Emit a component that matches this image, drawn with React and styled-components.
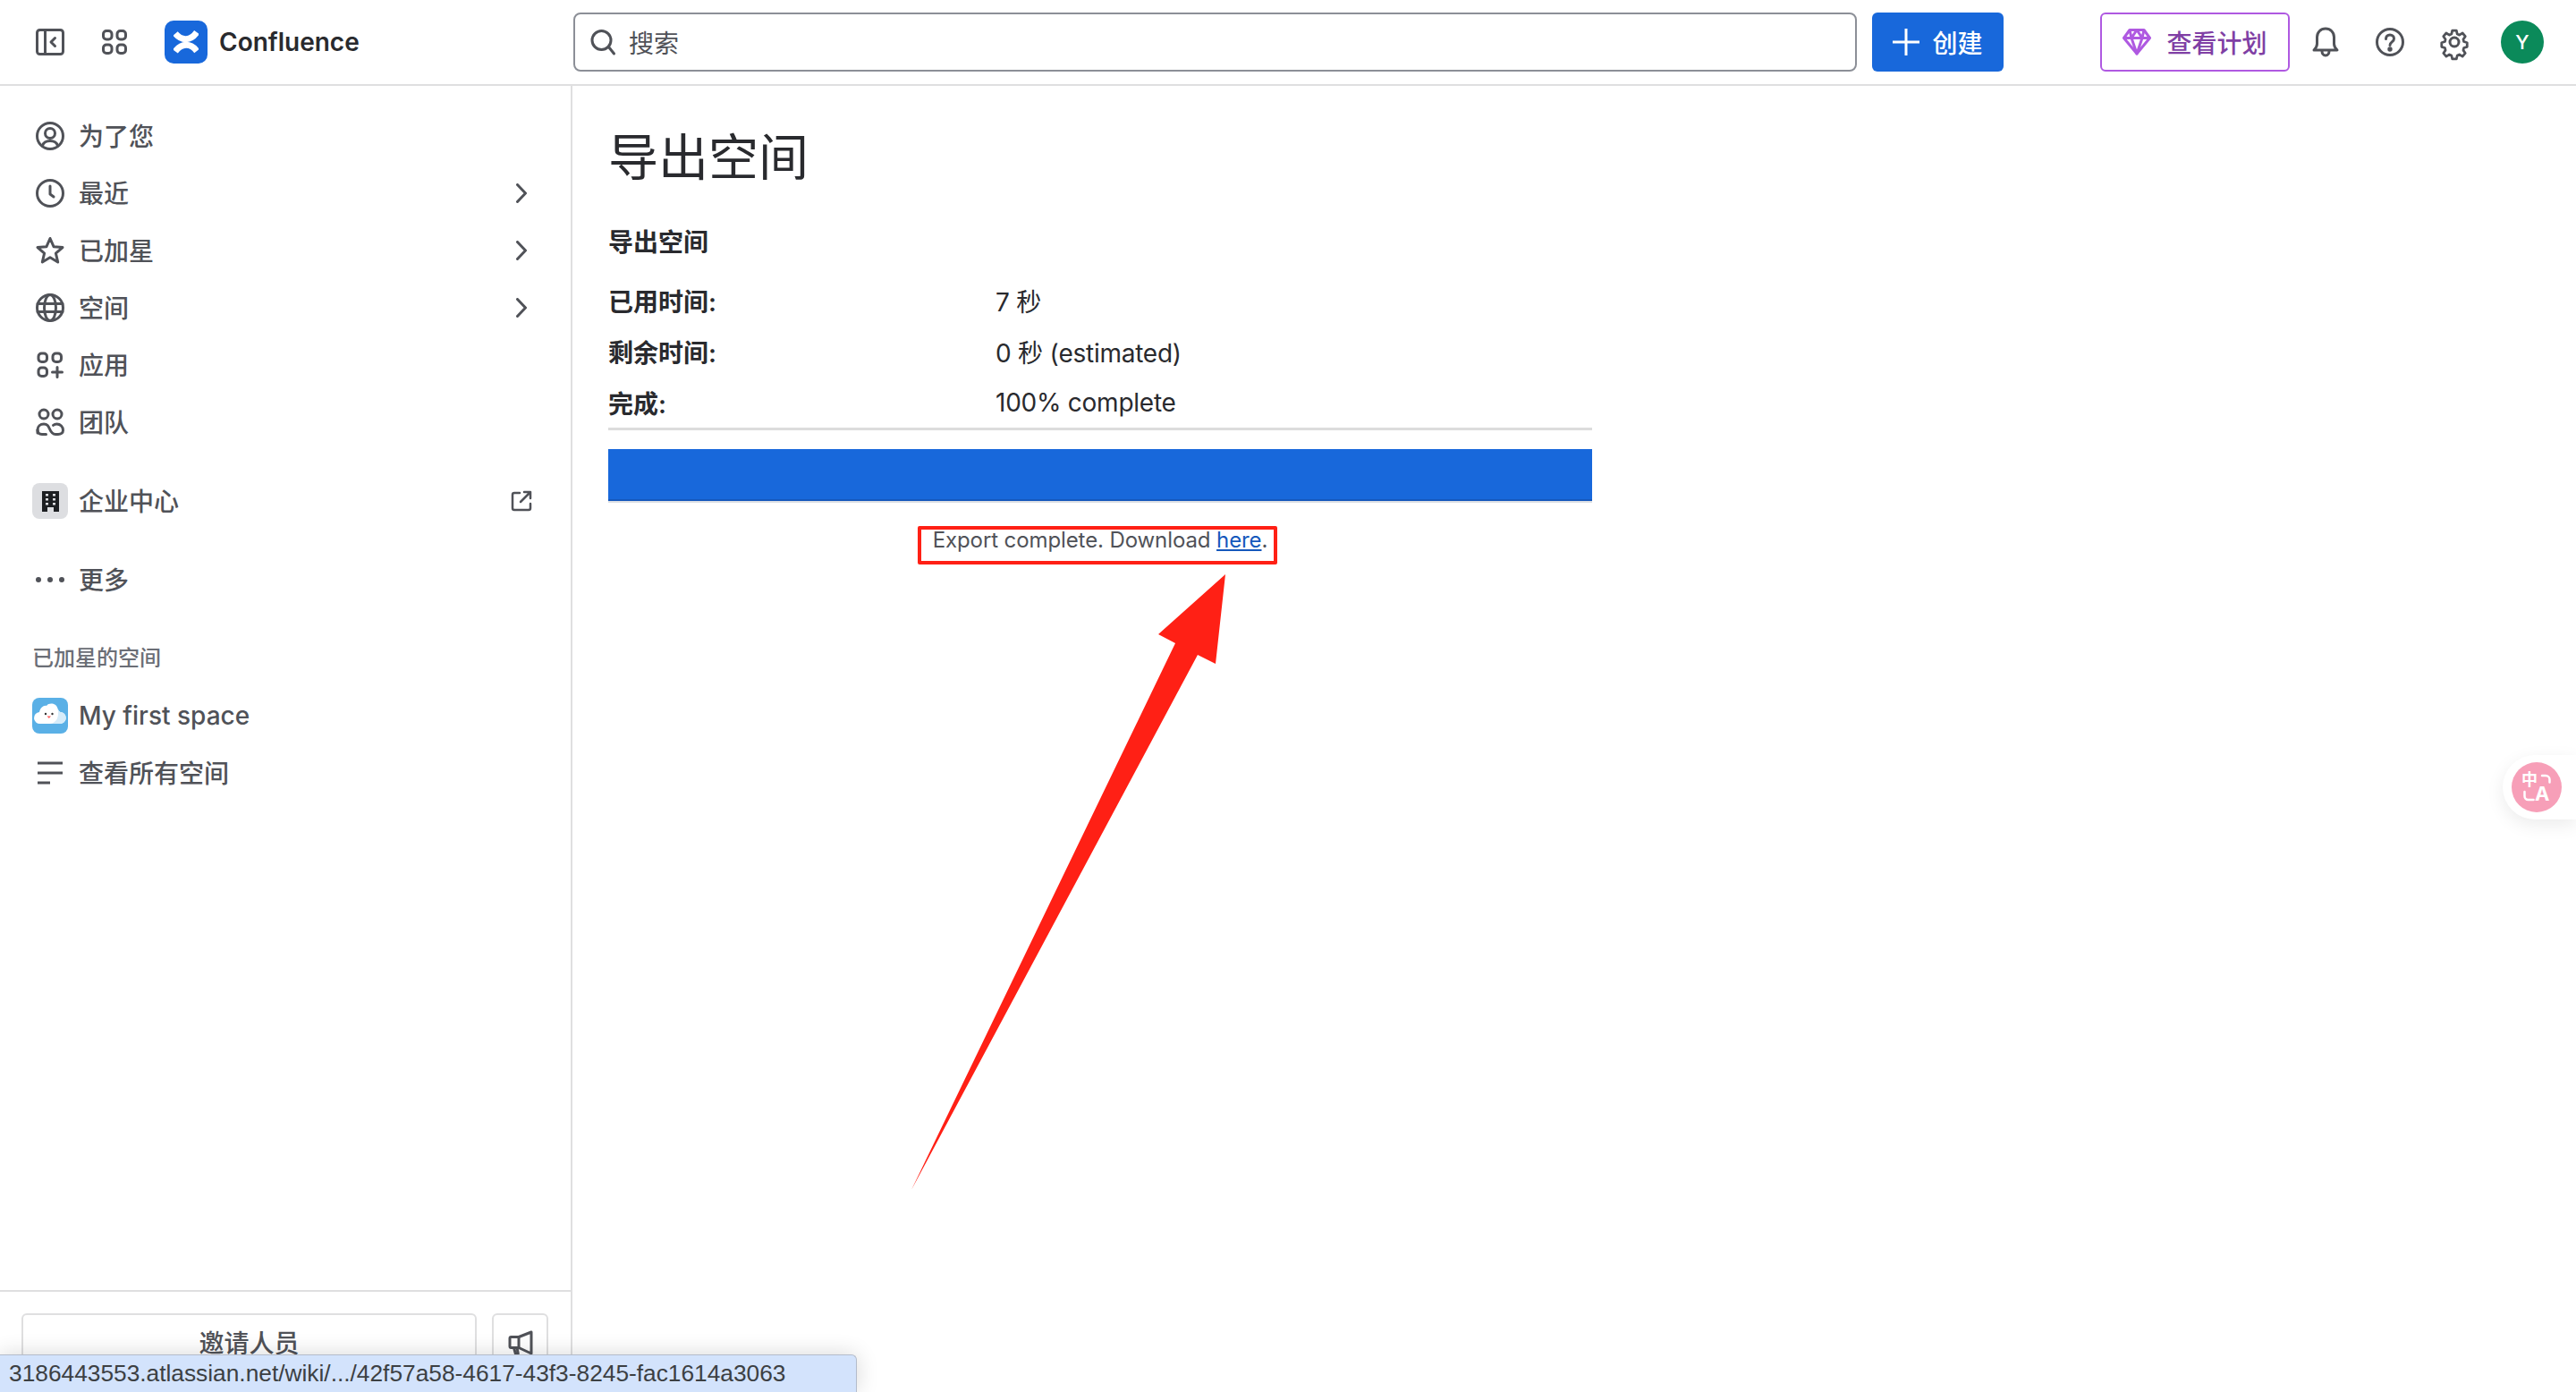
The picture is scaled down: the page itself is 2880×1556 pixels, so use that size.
import React from "react";
import styled, { createGlobalStyle } from "styled-components";

const FONT = `Inter, "Noto Sans CJK SC", "Noto Sans", sans-serif`;

const Global = createGlobalStyle`
  html, body { margin: 0; padding: 0; background: #fff; }
  body { font-family: ${FONT}; color: #292a2e; }
  * { box-sizing: border-box; }
`;

const Page = styled.div`
  position: relative;
  width: 2880px;
  height: 1556px;
  overflow: hidden;
  display: flex;
  flex-direction: column;
  background: #fff;
`;

const TopBar = styled.header`
  height: 96px;
  flex: none;
  display: flex;
  align-items: center;
  border-bottom: 2px solid #dfdfe0;
  padding-left: 40px;
`;

const IconSlot = styled.span`
  width: ${(p) => p.$w || 32}px;
  height: ${(p) => p.$h || 32}px;
  flex: none;
  display: inline-flex;
  align-items: center;
  justify-content: center;
  margin-left: ${(p) => p.$ml || 0}px;
  color: ${(p) => p.$color || "#505258"};
  svg { display: block; overflow: visible; }
`;

const Logo = styled.span`
  width: 48px;
  height: 48px;
  flex: none;
  margin-left: 40px;
  border-radius: 10px;
  background: #1868db;
  display: flex;
  align-items: center;
  justify-content: center;
`;

const Brand = styled.span`
  margin-left: 13px;
  font-size: 28px;
  font-weight: 600;
  color: #292a2e;
  width: 396px;
`;

const Search = styled.div`
  width: 1435px;
  height: 66px;
  flex: none;
  border: 2px solid #8c8f97;
  border-radius: 8px;
  display: flex;
  align-items: center;
  padding-left: 17px;
  gap: 15px;
  font-size: 28px;
  color: #505258;
`;

const Create = styled.button`
  width: 147px;
  height: 66px;
  flex: none;
  margin-left: 17px;
  border: 0;
  border-radius: 6px;
  background: #1868db;
  color: #fff;
  font: 500 28px ${FONT};
  display: flex;
  align-items: center;
  justify-content: center;
  gap: 14px;
  padding: 0;
`;

const Plan = styled.button`
  width: 212px;
  height: 66px;
  flex: none;
  margin-left: 108px;
  border: 2px solid #af59e1;
  border-radius: 6px;
  background: #fff;
  color: #803fa5;
  font: 500 28px ${FONT};
  display: flex;
  align-items: center;
  justify-content: center;
  gap: 17px;
  padding: 0;
`;

const Avatar = styled.span`
  width: 48px;
  height: 48px;
  flex: none;
  margin-left: 36px;
  border-radius: 50%;
  background: #0b8a5a;
  color: #fff;
  font-size: 22px;
  font-weight: 500;
  display: flex;
  align-items: center;
  justify-content: center;
`;

const Body = styled.div`
  flex: 1;
  min-height: 0;
  display: flex;
`;

const Sidebar = styled.aside`
  width: 640px;
  flex: none;
  border-right: 2px solid #dfdfe0;
  display: flex;
  flex-direction: column;
`;

const SideScroll = styled.nav`
  flex: 1;
  padding: 24px 0 0 36px;
  display: flex;
  flex-direction: column;
`;

const NavRow = styled.div`
  height: 64px;
  flex: none;
  display: flex;
  align-items: center;
  padding-left: ${(p) => (p.$tile ? 0 : 4)}px;
  gap: ${(p) => (p.$tile ? 12 : 16)}px;
  margin-top: ${(p) => p.$mt || 0}px;
  font-size: 28px;
  font-weight: 500;
  color: #505258;
`;

const NavText = styled.span`
  flex: 1;
  white-space: nowrap;
  padding-bottom: ${(p) => (p.$latin ? 0 : 2)}px;
`;

const Trail = styled.span`
  width: 32px;
  height: 32px;
  flex: none;
  margin-right: 39px;
  display: flex;
  align-items: center;
  justify-content: center;
  color: #505258;
`;

const SectionLabel = styled.div`
  height: 64px;
  margin-top: 24px;
  padding-bottom: 5px;
  flex: none;
  display: flex;
  align-items: center;
  font-size: 24px;
  font-weight: 500;
  color: #6b6e76;
`;

const Tile = styled.span`
  width: 40px;
  height: 40px;
  flex: none;
  border-radius: 8px;
  background: ${(p) => p.$bg};
  display: flex;
  align-items: center;
  justify-content: center;
  overflow: hidden;
`;

const SideFooter = styled.div`
  height: 114px;
  flex: none;
  border-top: 2px solid #dfdfe0;
  padding: 24px 0 0 24px;
  display: flex;
  gap: 17px;
`;

const Invite = styled.button`
  width: 509px;
  height: 66px;
  flex: none;
  border: 2px solid #dfdfe0;
  border-radius: 6px;
  background: #fff;
  color: #505258;
  font: 500 28px ${FONT};
  padding: 0 0 2px;
`;

const Feedback = styled.button`
  width: 63px;
  height: 66px;
  flex: none;
  border: 2px solid #dfdfe0;
  border-radius: 6px;
  background: #fff;
  color: #505258;
  padding: 0;
  display: flex;
  align-items: center;
  justify-content: center;
`;

const Main = styled.main`
  flex: 1;
  min-width: 0;
  padding: 38px 0 0 40px;
`;

const Title = styled.h1`
  margin: 0;
  font-size: 56px;
  line-height: 84px;
  font-weight: 400;
  color: #292a2e;
`;

const Subtitle = styled.h2`
  margin: 33px 0 0;
  font-size: 28px;
  line-height: 40px;
  font-weight: 600;
  color: #292a2e;
`;

const Panel = styled.section`
  width: 1100px;
  margin-top: 16px;
`;

const InfoRow = styled.div`
  height: 57px;
  display: grid;
  grid-template-columns: 433px 1fr;
  align-items: center;
  font-size: 28px;
  color: #292a2e;
`;

const InfoKey = styled.span`
  font-weight: 600;
`;

const InfoValue = styled.span`
  letter-spacing: -0.25px;
`;

const Rule = styled.div`
  height: 3px;
  background: #dcdcdc;
`;

const Bar = styled.div`
  height: 60px;
  margin-top: 21px;
  background: #1868db;
  border-bottom: 2px solid #dcdfe4;
  box-shadow: inset 0 -2px 0 #1558bc;
`;

const Done = styled.div`
  margin-top: 24px;
  text-align: center;
  font-size: 24px;
  line-height: 36px;
  letter-spacing: -0.1px;
  color: #505258;
  a { color: #1558bc; text-decoration: underline; }
`;

const MarkBox = styled.div`
  position: absolute;
  left: 1026px;
  top: 588px;
  width: 402px;
  height: 43px;
  border: 4px solid #ff2015;
  border-radius: 2px;
`;

const MarkArrow = styled.svg`
  position: absolute;
  left: 0;
  top: 0;
  width: 2880px;
  height: 1556px;
  pointer-events: none;
`;

const Translate = styled.div`
  position: absolute;
  right: 0;
  top: 844px;
  width: 82px;
  height: 72px;
  background: #fff;
  border-radius: 36px 0 0 36px;
  box-shadow: 0 6px 20px rgba(0, 0, 0, 0.08);
  padding: 8px 0 0 10px;
`;

const TranslateDot = styled.div`
  width: 56px;
  height: 56px;
  border-radius: 50%;
  background: #f79fb8;
  color: #fff;
  position: relative;
`;

const TransZh = styled.span`
  position: absolute;
  left: 11px;
  top: 13px;
  font-size: 18px;
  line-height: 14px;
  font-weight: 700;
`;

const TransEn = styled.span`
  position: absolute;
  left: 26px;
  top: 27px;
  font-size: 22px;
  line-height: 16px;
  font-weight: 700;
`;

const TransArcs = styled.svg`
  position: absolute;
  left: 0;
  top: 0;
  width: 56px;
  height: 56px;
`;

const StatusBubble = styled.div`
  position: absolute;
  left: 0;
  bottom: 0;
  width: 958px;
  height: 42px;
  background: #d3e3fc;
  border-top: 1px solid #b4bccb;
  border-right: 1px solid #b4bccb;
  border-top-right-radius: 6px;
  box-shadow: 0 0 24px rgba(0, 0, 0, 0.16);
  padding-left: 10px;
  font-family: "Liberation Sans", Arial, sans-serif;
  font-size: 26.3px;
  line-height: 40px;
  color: #3c4043;
  white-space: nowrap;
`;

const line = { fill: "none", stroke: "currentColor", strokeWidth: 3, strokeLinecap: "round", strokeLinejoin: "round" };

const I = ({ children, size = 32 }) => (
  <svg width={size} height={size} viewBox="0 0 32 32" {...line}>{children}</svg>
);

const PanelIcon = () => (
  <svg width="32" height="30" viewBox="0 0 32 30" {...line}>
    <rect x="1.5" y="1.5" width="29" height="27" rx="3" />
    <path d="M10.5 2v26" />
    <path d="M21.5 10.5 17 15l4.5 4.5" />
  </svg>
);
const GridIcon = () => (
  <I>
    <rect x="3.5" y="3.5" width="9.5" height="9.5" rx="3.5" />
    <rect x="19" y="3.5" width="9.5" height="9.5" rx="3.5" />
    <rect x="3.5" y="19" width="9.5" height="9.5" rx="3.5" />
    <rect x="19" y="19" width="9.5" height="9.5" rx="3.5" />
  </I>
);
const UserIcon = () => (
  <I>
    <circle cx="16" cy="16" r="14.5" />
    <circle cx="16" cy="13" r="5.5" />
    <path d="M7.500 27c1-4 4-5.500 8.500-5.500s7.500 1.500 8.500 5.500" />
  </I>
);
const ClockIcon = () => (
  <I>
    <circle cx="16" cy="16" r="14.5" />
    <path d="M16 8v9l4 3" />
  </I>
);
const StarIcon = () => (
  <I>
    <path d="M16 2.500l4 9.200 10 .9-7.600 6.600 2.300 9.800L16 23.800 7.300 29l2.300-9.800L2 12.600l10-.9z" />
  </I>
);
const GlobeIcon = () => (
  <I>
    <circle cx="16" cy="16" r="14.5" />
    <ellipse cx="16" cy="16" rx="6.5" ry="14.5" />
    <path d="M2 11.500h28M2 20.500h28" />
  </I>
);
const AppsIcon = () => (
  <I>
    <rect x="3" y="3" width="9.5" height="9.5" rx="3.5" />
    <rect x="19" y="3" width="9.5" height="9.5" rx="3.5" />
    <rect x="3" y="19" width="9.5" height="9.5" rx="3.5" />
    <path d="M24 18.500v11M18.500 24h11" />
  </I>
);
const TeamIcon = () => (
  <I>
    <circle cx="9" cy="7" r="5" />
    <circle cx="24" cy="7" r="5" />
    <path d="M2 28v-3.500c0-4 3-6.500 7-6.500s5 2 6.500 5.500 3 6 6.500 6h3c3 0 5.500-1.500 5.500-4.500 0-4-3-7-7-7-1.500 0-3 .5-4 1.300" />
    <path d="M2 24.500C2 28 4 29.500 7 29.500h4.500" />
  </I>
);
const Chevron = () => (
  <svg width="12" height="22" viewBox="0 0 12 22" {...line}>
    <path d="M1.500 1.500 10.500 11l-9 9.500" />
  </svg>
);
const ExternalIcon = () => (
  <svg width="24" height="24" viewBox="0 0 24 24" fill="none" stroke="currentColor" strokeWidth="2.5" strokeLinecap="round" strokeLinejoin="round">
    <path d="M10 3H4a2 2 0 0 0-2 2v15a2 2 0 0 0 2 2h16a2 2 0 0 0 2-2v-5" />
    <path d="M15 2h7v7M22 2 11 13" />
  </svg>
);
const Dots = () => (
  <svg width="32" height="8" viewBox="0 0 32 8" fill="currentColor">
    <circle cx="3" cy="4" r="3" /><circle cx="16" cy="4" r="3" /><circle cx="29" cy="4" r="3" />
  </svg>
);
const ListIcon = () => (
  <svg width="28" height="26" viewBox="0 0 28 26" fill="none" stroke="currentColor" strokeWidth="3">
    <path d="M0 2h28M0 13h28M0 24h14" />
  </svg>
);
const BuildingIcon = () => (
  <svg width="19" height="23" viewBox="0 0 19 23" fill="#1d1f22">
    <path fillRule="evenodd" d="M0 0h19v23h-6v-5H6v5H0zM4 3v2.500h3V3zm8 0v2.500h3V3zM4 8v2.500h3V8zm8 0v2.500h3V8zM4 13v2.500h3V13zm8 0v2.500h3V13z" />
  </svg>
);
const CloudIcon = () => (
  <svg width="40" height="40" viewBox="0 0 40 40">
    <path fill="#fff" d="M9 29a6.500 6.500 0 0 1-1-13C9 11 13 8 16 9c3-4 11-3 12.500 3 1 3 2 3 3 4a6.500 6.500 0 0 1-.5 13z" />
    <path fill="#d6ecfa" d="M31.500 16a6.500 6.500 0 0 1-.5 13H20c7-1 10.500-7 8.500-17 1 3 2 3 3 4z" />
    <circle cx="15" cy="18" r="1.200" fill="#333" />
    <circle cx="22.500" cy="18" r="1.200" fill="#333" />
    <path fill="#ff5b5b" d="M16.500 20.500h4.500l-2.200 2.500z" />
  </svg>
);
const SearchIcon = () => (
  <svg width="28" height="30" viewBox="0 0 28 30" {...line}>
    <circle cx="12.5" cy="13" r="10.5" />
    <path d="m20.500 20.500 6 7.500" />
  </svg>
);
const PlusIcon = () => (
  <svg width="30" height="30" viewBox="0 0 30 30" fill="none" stroke="#fff" strokeWidth="3">
    <path d="M15 0v30M0 15h30" />
  </svg>
);
const Diamond = () => (
  <svg width="32" height="30" viewBox="0 0 32 30" fill="none" stroke="#af59e1" strokeWidth="3" strokeLinejoin="round">
    <path d="M8 1.500h16l6.500 9L16 28 1.500 10.500z" />
    <path d="M1.500 10.500h29M10 10.500 16 28l6-17.500M8 1.500l2 9 6-9 6 9 2-9" />
  </svg>
);
const Bell = () => (
  <svg width="30" height="34" viewBox="0 0 30 34" {...line}>
    <path d="M2 26c2-2 3.500-3.500 3.500-7v-7.500C5.500 6 9.500 2 15 2s9.500 4 9.500 9.500V19c0 3.500 1.500 5 3.500 7z" />
    <path d="M11 27c0 3 1.700 5 4 5s4-2 4-5" />
  </svg>
);
const Help = () => (
  <I>
    <circle cx="16" cy="16" r="14.5" />
    <path d="M11.500 12.500c0-2.800 2-4.500 4.500-4.500s4.500 1.700 4.500 4.200c0 3.800-4.500 3.600-4.500 7.300" />
    <circle cx="16" cy="24" r="1.200" fill="currentColor" />
  </I>
);
const Gear = () => (
  <I>
    <path d="M13.500 2h5l1 4.300 2.600 1.100 3.800-2.300 3.400 4-2.500 3.600.7 2.800 4 1.300v5l-4 1.300-.7 2.800 2.500 3.600-3.400 4-3.800-2.300-2.600 1.100-1 4.300h-5l-1-4.300-2.600-1.100-3.800 2.300-3.400-4 2.500-3.600-.7-2.800-4-1.300v-5l4-1.300.7-2.800L2.700 9.100l3.400-4 3.800 2.300 2.600-1.100z" transform="translate(1.300 1.300) scale(.92)" />
    <circle cx="16" cy="16" r="5" />
  </I>
);
const Mega = () => (
  <svg width="28" height="28" viewBox="0 0 28 28" {...line}>
    <path d="M3.500 7.500H12L26 2v24l-14-6.500H3.500a1.500 1.500 0 0 1-1.500-1.500V9a1.500 1.500 0 0 1 1.500-1.500z" />
    <path d="M12 7.500v12M6.500 19.500l1.800 6.500h3l-1.300-6.500" />
  </svg>
);
const LogoMark = () => (
  <svg width="28" height="28" viewBox="0 0 28 28" fill="none" stroke="#fff" strokeWidth="7">
    <path d="M2 4.500C9 13 19 13 26 3" />
    <path d="M2 24.500C9 15 19 15 26 24" />
  </svg>
);

const items = [
  ["为了您", <UserIcon />],
  ["最近", <ClockIcon />, true],
  ["已加星", <StarIcon />, true],
  ["空间", <GlobeIcon />, true],
  ["应用", <AppsIcon />],
  ["团队", <TeamIcon />],
];

const info = [
  ["已用时间:", "7 秒"],
  ["剩余时间:", "0 秒 (estimated)"],
  ["完成:", "100% complete"],
];

export default function App() {
  return (
    <Page>
      <Global />
      <TopBar>
        <IconSlot $w={32} $h={30}><PanelIcon /></IconSlot>
        <IconSlot $ml={40}><GridIcon /></IconSlot>
        <Logo><LogoMark /></Logo>
        <Brand>Confluence</Brand>
        <Search>
          <IconSlot $w={28} $h={30}><SearchIcon /></IconSlot>
          <span>搜索</span>
        </Search>
        <Create><PlusIcon /><span>创建</span></Create>
        <Plan><Diamond /><span>查看计划</span></Plan>
        <IconSlot $ml={25} $h={34} $w={30}><Bell /></IconSlot>
        <IconSlot $ml={41}><Help /></IconSlot>
        <IconSlot $ml={40}><Gear /></IconSlot>
        <Avatar>Y</Avatar>
      </TopBar>
      <Body>
        <Sidebar>
          <SideScroll>
            {items.map(([label, icon, more]) => (
              <NavRow key={label}>
                <IconSlot>{icon}</IconSlot>
                <NavText>{label}</NavText>
                {more && <Trail><Chevron /></Trail>}
              </NavRow>
            ))}
            <NavRow $tile $mt={24}>
              <Tile $bg="#dddee1"><BuildingIcon /></Tile>
              <NavText>企业中心</NavText>
              <Trail><ExternalIcon /></Trail>
            </NavRow>
            <NavRow $mt={24}>
              <IconSlot><Dots /></IconSlot>
              <NavText>更多</NavText>
            </NavRow>
            <SectionLabel>已加星的空间</SectionLabel>
            <NavRow $tile>
              <Tile $bg="#5ab0e6"><CloudIcon /></Tile>
              <NavText $latin>My first space</NavText>
            </NavRow>
            <NavRow>
              <IconSlot><ListIcon /></IconSlot>
              <NavText>查看所有空间</NavText>
            </NavRow>
          </SideScroll>
          <SideFooter>
            <Invite>邀请人员</Invite>
            <Feedback><Mega /></Feedback>
          </SideFooter>
        </Sidebar>
        <Main>
          <Title>导出空间</Title>
          <Subtitle>导出空间</Subtitle>
          <Panel>
            {info.map(([k, v]) => (
              <InfoRow key={k}>
                <InfoKey>{k}</InfoKey>
                <InfoValue>{v}</InfoValue>
              </InfoRow>
            ))}
            <Rule />
            <Bar />
            <Done>Export complete. Download <a href="#here">here</a>.</Done>
          </Panel>
        </Main>
      </Body>
      <MarkBox />
      <MarkArrow viewBox="0 0 2880 1556">
        <path fill="#ff2015" d="M1370 642 1359 742 1339 732 1019 1330 1314 719 1295 709z" />
      </MarkArrow>
      <Translate>
        <TranslateDot>
          <TransArcs viewBox="0 0 56 56" fill="none" stroke="#fff" strokeWidth="2.5" strokeLinecap="round">
            <path d="M34 15h4a4.500 4.500 0 0 1 4.500 4.500v3" />
            <path d="M14.500 33v5a4 4 0 0 0 4 4h6" />
          </TransArcs>
          <TransZh>中</TransZh>
          <TransEn>A</TransEn>
        </TranslateDot>
      </Translate>
      <StatusBubble>3186443553.atlassian.net/wiki/.../42f57a58-4617-43f3-8245-fac1614a3063</StatusBubble>
    </Page>
  );
}
